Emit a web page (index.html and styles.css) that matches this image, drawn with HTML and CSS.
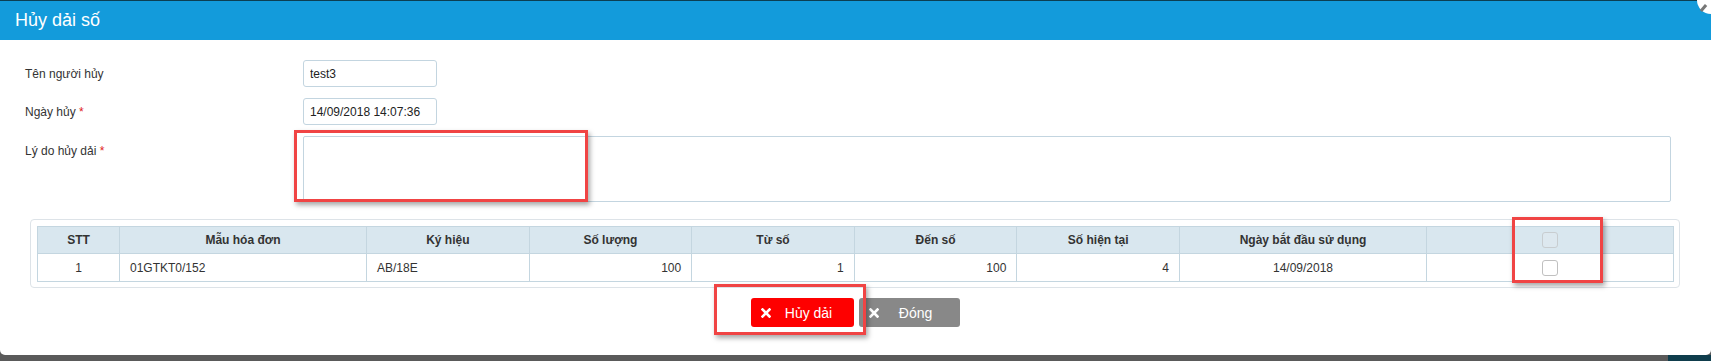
FILE: index.html
```html
<!DOCTYPE html>
<html>
<head>
	<title>Hủy dải số</title>
	<link rel="stylesheet" href="styles.css">
</head>
<body>
	<div class="modal">
		<div class="modal-header">
			<h1>Hủy dải số</h1>
			<span class="close-btn"></span>
		</div>
		<div class="modal-body">
			<div class="form-row">
				<label>Tên người hủy</label>
				<input type="text" class="short-input" value="test3">
			</div>
			<div class="form-row">
				<label>Ngày hủy <span class="req">*</span></label>
				<input type="text" class="short-input" value="14/09/2018 14:07:36">
			</div>
			<div class="form-row">
				<label class="top-label">Lý do hủy dải <span class="req">*</span></label>
				<textarea class="reason"></textarea>
			</div>

			<div class="grid-panel">
				<table>
					<thead>
						<tr>
							<th class="c-stt">STT</th>
							<th class="c-wide">Mẫu hóa đơn</th>
							<th>Ký hiệu</th>
							<th>Số lượng</th>
							<th>Từ số</th>
							<th>Đến số</th>
							<th>Số hiện tại</th>
							<th class="c-wide">Ngày bắt đầu sử dụng</th>
							<th class="c-wide"><span class="check"></span></th>
						</tr>
					</thead>
					<tbody>
						<tr>
							<td class="center">1</td>
							<td>01GTKT0/152</td>
							<td>AB/18E</td>
							<td class="num">100</td>
							<td class="num">1</td>
							<td class="num">100</td>
							<td class="num">4</td>
							<td class="center">14/09/2018</td>
							<td class="center"><span class="check"></span></td>
						</tr>
					</tbody>
				</table>
			</div>

			<div class="actions">
				<button class="btn btn-red">
					<svg width="10" height="10" viewBox="0 0 10 10"><path d="M1.5 1.5 L8.5 8.5 M8.5 1.5 L1.5 8.5" stroke="#fff" stroke-width="2.6" stroke-linecap="square"/></svg>
					<span>Hủy dải</span>
				</button>
				<button class="btn btn-gray">
					<svg width="10" height="10" viewBox="0 0 10 10"><path d="M1.5 1.5 L8.5 8.5 M8.5 1.5 L1.5 8.5" stroke="#fff" stroke-width="2.6" stroke-linecap="square"/></svg>
					<span>Đóng</span>
				</button>
			</div>
		</div>
	</div>
	<div class="backdrop">
		<span class="backdrop-tab"></span>
	</div>

	<!-- annotation marks drawn over the dialog -->
	<div class="mark mark-reason"></div>
	<div class="mark mark-check"></div>
	<div class="mark mark-button"></div>
</body>
</html>
```

FILE: styles.css
```css
body {
  margin: 0;
  font-family: "Liberation Sans", Arial, sans-serif;
  font-size: 12px;
  color: #333;
  background-color: #5a5a5a;
  position: relative;
  overflow: hidden;
}

.modal {
  background-color: #fff;
  height: 355px;
  border-radius: 0 0 5px 5px;
}

.modal-header {
  position: relative;
  height: 39px;
  border-top: 1px solid #0c3f52;
  background-color: #139bdb;
  display: flex;
  align-items: center;
  padding-left: 15px;
}

.modal-header h1 {
  margin: 0;
  font-size: 18px;
  font-weight: normal;
  color: #fff;
}

.close-btn {
  position: absolute;
  right: -14px;
  top: -15px;
  width: 28px;
  height: 28px;
  border-radius: 50%;
  background-color: #fff;
}

.close-btn::after {
  content: "";
  position: absolute;
  left: 5px;
  top: 18px;
  width: 3px;
  height: 8px;
  background-color: #777;
  transform: rotate(40deg);
}

.modal-body {
  padding-top: 20px;
}

.form-row {
  display: grid;
  grid-template-columns: 278px 1fr;
  align-items: center;
  padding-left: 25px;
  padding-right: 40px;
  margin-bottom: 11px;
}

.form-row label {
  color: #333;
}

.form-row .top-label {
  align-self: start;
  padding-top: 8px;
}

.req {
  color: #e02020;
}

.short-input {
  width: 134px;
  height: 27px;
  box-sizing: border-box;
  border: 1px solid #c3d5e0;
  border-radius: 3px;
  padding: 0 6px;
  font-family: "Liberation Sans", Arial, sans-serif;
  font-size: 12px;
  color: #222;
}

.reason {
  height: 66px;
  box-sizing: border-box;
  border: 1px solid #c3d5e0;
  border-radius: 2px;
  resize: none;
  margin: 0;
  display: block;
}

.grid-panel {
  margin: 17px 31px 0 30px;
  padding: 6px 5px 5px 6px;
  border: 1px solid #dde3e8;
  border-radius: 4px;
}

table {
  width: 100%;
  border-collapse: collapse;
  table-layout: fixed;
}

table th,
table td {
  border: 1px solid #c4d6e0;
  padding: 0 10px;
}

table th {
  height: 26px;
  background-color: #d9e7ef;
  font-weight: bold;
  text-align: center;
  color: #333;
}

table td {
  height: 27px;
  text-align: left;
}

.c-stt {
  width: 61px;
}

.c-wide {
  width: 226px;
}

table td.num {
  text-align: right;
}

table td.center {
  text-align: center;
}

.check {
  display: inline-block;
  width: 14px;
  height: 14px;
  border: 1px solid #c0c0c0;
  border-radius: 3px;
  background-color: #fff;
  vertical-align: middle;
}

th .check {
  background-color: #dde8ef;
  border-color: #c8cdd0;
}

.actions {
  display: flex;
  justify-content: center;
  gap: 5px;
  margin-top: 10px;
}

.btn {
  display: flex;
  align-items: center;
  height: 29px;
  border: none;
  border-radius: 3px;
  padding: 0 8px 0 10px;
  font-family: "Liberation Sans", Arial, sans-serif;
  font-size: 14px;
  color: #fff;
  cursor: pointer;
}

.btn span {
  flex: 1;
  text-align: center;
}

.btn-red {
  width: 103px;
  background-color: #fe0000;
}

.btn-gray {
  width: 101px;
  background-color: #888;
}

.backdrop {
  height: 6px;
  display: flex;
  justify-content: flex-end;
}

.backdrop-tab {
  width: 43px;
  background-color: #0f3d4c;
}

.mark {
  position: absolute;
  border: 3px solid #f04444;
  box-shadow: 2px 3px 5px rgba(0, 0, 0, 0.35);
}

.mark-reason {
  left: 294px;
  top: 130px;
  width: 288px;
  height: 66px;
}

.mark-check {
  left: 1512px;
  top: 217px;
  width: 85px;
  height: 60px;
}

.mark-button {
  left: 714px;
  top: 284px;
  width: 146px;
  height: 45px;
}
```
